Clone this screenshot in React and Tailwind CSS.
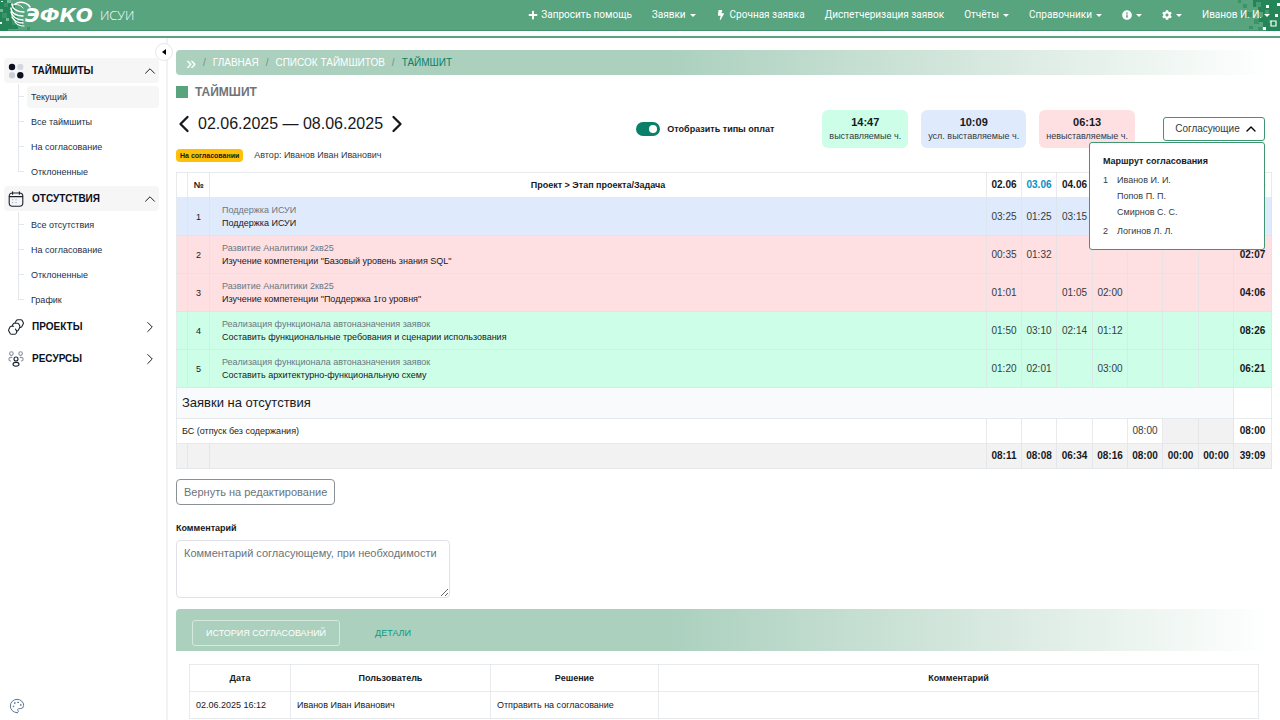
import { ChevronLeft, ChevronRight, ChevronUp, Palette } from "lucide-react";
import { FaBolt, FaCog, FaInfoCircle, FaPlus } from "react-icons/fa";

const NAV_ITEMS = [
  { label: "Запросить помощь", icon: <FaPlus className="size-[10px]" />, gap: "gap-[3px]" },
  { label: "Заявки", caret: true },
  { label: "Срочная заявка", icon: <FaBolt className="size-[10px]" />, gap: "gap-1" },
  { label: "Диспетчеризация заявок" },
  { label: "Отчёты", caret: true },
  { label: "Справочники", caret: true },
  { title: "Информация", icon: <FaInfoCircle className="size-[10px]" />, caret: true },
  { title: "Настройки", icon: <FaCog className="size-[10px]" />, caret: true },
  { label: "Иванов И. И.", caret: true, gap: "gap-[2px]" },
];

const MENU = [
  {
    title: "ТАЙМШИТЫ",
    icon: <DotsIcon />,
    items: ["Текущий", "Все таймшиты", "На согласование", "Отклоненные"],
    active: "Текущий",
  },
  {
    title: "ОТСУТСТВИЯ",
    icon: <CalendarIcon />,
    items: ["Все отсутствия", "На согласование", "Отклоненные", "График"],
  },
  { title: "ПРОЕКТЫ", icon: <ProjectsIcon /> },
  { title: "РЕСУРСЫ", icon: <PeopleIcon /> },
];

const STATS = [
  { value: "14:47", label: "выставляемые ч.", color: "bg-[#ccfee8]" },
  { value: "10:09", label: "усл. выставляемые ч.", color: "bg-[#dfeafd]" },
  { value: "06:13", label: "невыставляемые ч.", color: "bg-[#fedfe2]" },
];

const DAYS = ["02.06", "03.06", "04.06", "05.06", "06.06", "07.06", "08.06"];

const ROWS = [
  {
    project: "Поддержка ИСУИ",
    task: "Поддержка ИСУИ",
    hours: ["03:25", "01:25", "03:15", "", "", "", ""],
    total: "",
    color: "bg-[#dfeafd]",
  },
  {
    project: "Развитие Аналитики 2кв25",
    task: 'Изучение компетенции "Базовый уровень знания SQL"',
    hours: ["00:35", "01:32", "", "", "", "", ""],
    total: "02:07",
    color: "bg-[#fedfe2]",
  },
  {
    project: "Развитие Аналитики 2кв25",
    task: 'Изучение компетенции "Поддержка 1го уровня"',
    hours: ["01:01", "", "01:05", "02:00", "", "", ""],
    total: "04:06",
    color: "bg-[#fedfe2]",
  },
  {
    project: "Реализация функционала автоназначения заявок",
    task: "Составить функциональные требования и сценарии использования",
    hours: ["01:50", "03:10", "02:14", "01:12", "", "", ""],
    total: "08:26",
    color: "bg-[#ccfee8]",
  },
  {
    project: "Реализация функционала автоназначения заявок",
    task: "Составить архитектурно-функциональную схему",
    hours: ["01:20", "02:01", "", "03:00", "", "", ""],
    total: "06:21",
    color: "bg-[#ccfee8]",
  },
];

const ABSENCE = ["", "", "", "", "08:00", "", ""];
const TOTALS = ["08:11", "08:08", "06:34", "08:16", "08:00", "00:00", "00:00"];

const ROUTE = [
  { step: 1, people: ["Иванов И. И.", "Попов П. П.", "Смирнов С. С."] },
  { step: 2, people: ["Логинов Л. Л."] },
];

const cell = "border border-[#dee2e6]/70";

function DotsIcon() {
  return (
    <svg viewBox="0 0 16 16" className="size-4">
      <circle cx="4" cy="4" r="3.2" fill="#0b1020" />
      <rect x="9.3" y="1" width="6" height="6" rx="2.2" fill="#d3d7de" />
      <rect x="1" y="9.3" width="6" height="6" rx="2.2" fill="#c9ced8" />
      <circle cx="12.3" cy="12.3" r="3.2" fill="#0b1020" />
    </svg>
  );
}

function CalendarIcon() {
  return (
    <svg viewBox="0 0 16 16" className="size-4" fill="none" stroke="#1b2230" strokeWidth="1.1" strokeLinecap="round">
      <rect x="1.2" y="2" width="13.6" height="13.2" rx="3.2" />
      <path d="M1.4 5.6h13.2M4.6.7v2.6M11.4.7v2.6" />
      <path d="M4.6 8.8h.1M8 8.8h.1M4.6 11.6h.1M8 11.6h.1" stroke="#98a1b0" />
    </svg>
  );
}

function ProjectsIcon() {
  return (
    <svg viewBox="0 0 16 16" className="size-4" fill="none" stroke="#1b2230" strokeWidth="1.1" strokeLinecap="round" strokeLinejoin="round">
      <path d="M7.2 3.6 8.4 1.5a1.6 1.6 0 0 1 1.4-.8h3a1.6 1.6 0 0 1 1.4.8l1 1.9a1.6 1.6 0 0 1 0 1.5l-1.5 2.8a1.6 1.6 0 0 1-1.4.8h-.6" />
      <path d="M4.2 6.8 5 5.2a1.6 1.6 0 0 1 1.4-.9h3a1.6 1.6 0 0 1 1.4.8l1 1.9a1.6 1.6 0 0 1 0 1.5l-1.4 2.6a1.6 1.6 0 0 1-1.4.9h-.5" />
      <path d="M5.6 7.2H3.4a1.6 1.6 0 0 0-1.4.8L.8 10.4a1.6 1.6 0 0 0 0 1.5l1.4 2.6a1.6 1.6 0 0 0 1.4.8h3a1.6 1.6 0 0 0 1.4-.8l.6-1.1a1.6 1.6 0 0 0 0-1.5L7.4 10" />
    </svg>
  );
}

function PeopleIcon() {
  return (
    <svg viewBox="0 0 16 16" className="size-4" fill="none" strokeWidth="1.1" strokeLinecap="round">
      <g stroke="#8a95a8">
        <circle cx="3.4" cy="2.6" r="1.8" />
        <circle cx="12.6" cy="2.6" r="1.8" />
        <path d="M3.8 6.4H2.6C.3 6.9.3 9.4 2.6 10M12.2 6.4h1.2c2.3.5 2.3 3 0 3.6" />
      </g>
      <g stroke="#1b2230">
        <circle cx="8" cy="8" r="2" />
        <ellipse cx="8" cy="13.3" rx="3" ry="1.9" />
      </g>
    </svg>
  );
}

function Caret() {
  return (
    <svg viewBox="0 0 6 3" className="h-[3px] w-[6px]" fill="currentColor">
      <path d="M0 0h6L3 3z" />
    </svg>
  );
}

function Logo() {
  return (
    <a href="#" className="relative flex h-full items-center pl-[25px] text-white">
      <svg viewBox="0 0 40 31" className="absolute top-0 left-0 h-[31px] w-10">
        <path fill="#238558" d="M0 0h11v5h4v5h-4v6h6v5h5v5h-4v3H8v2H0z" />
        <path fill="#3b9369" d="M4 3h4v4H4zM11 10h4v4h-4zM2 13h5v5H2zM12 20h5v5h-5zM17 23h4v4h-4zM27 27h3v3h-3z" />
        <path fill="#74b896" d="M7 0h4v3H7zM0 9h3v3H0zM6 18h3v3H6z" />
        <path fill="#fff" d="M0 22h2v2H0zM1 1h2v1H1z" />
        <g fill="none" stroke="#fff" strokeWidth="1.5" strokeLinecap="round">
          <path d="M15 4c4-3 12-2 15 3" />
          <path d="M13 5c2-1 7-1 10 3" strokeWidth="1" />
          <path d="M12 4c0 4 4 8 12 8" />
          <path d="M11 8c0 4 4 8 12 8" />
          <path d="M11 12c1 4 5 8 12 8" />
          <path d="M12 17c2 4 5 6 11 6" />
          <path d="M15 22c2 3 5 4 9 4" strokeWidth="1.2" />
        </g>
      </svg>
      <span className="relative font-['DejaVu_Sans',sans-serif] text-[20px] leading-none font-bold italic">ЭФКО</span>
      <span className="ml-[7px] font-['Open_Sans',sans-serif] text-[13px] leading-none font-light">ИСУИ</span>
    </a>
  );
}

function CornerPattern() {
  return (
    <svg viewBox="0 0 48 31" className="absolute top-0 right-0 h-[31px] w-12">
      <path fill="#238558" d="M21 0h27v31H34v-4h-3v-5h-4v-5h4v-5h-5V7h-5z" />
      <path fill="#3b9369" d="M6 0h3v3H6zM11 4h4v4h-4zM14 12h6v5h-6zM8 14h4v4H8zM22 19h5v5h-5zM17 26h4v3h-4zM26 27h4v4h-4z" />
      <path fill="#469b73" d="M24 2h5v5h-5zM33 10h4v4h-4zM37 20h3v3h-3z" />
      <path fill="#fff" d="M34 5h3v3h-3zM43 14h3v3h-3zM31 27h3v3h-3zM45 3h3v3h-3z" />
      <path fill="none" stroke="#fff" strokeWidth="1.2" d="M39 21h5v5h-5z" />
    </svg>
  );
}

function Header() {
  return (
    <header className="border-b-2 border-[#57a47f] pb-[5px]">
      <div className="relative flex h-[31px] items-center justify-between border-b border-[#46946f] bg-[#57a47f] pr-[10px]">
        <CornerPattern />
        <Logo />
        <nav className="relative flex items-center gap-5 font-[Roboto,sans-serif] text-[10px] text-white">
          {NAV_ITEMS.map((item) => (
            <a
              key={item.label || item.title}
              href="#"
              aria-label={item.title}
              className={`flex items-center whitespace-nowrap ${item.gap || "gap-1"}`}
            >
              {item.icon}
              {item.label}
              {item.caret && <Caret />}
            </a>
          ))}
        </nav>
      </div>
    </header>
  );
}

function MenuGroup({ group }) {
  const Arrow = group.items ? ChevronUp : ChevronRight;

  return (
    <li className={group.items ? "" : "mb-[7px]"}>
      <button
        type="button"
        className={`flex h-[25px] w-full items-center rounded pl-1 text-[10px] font-bold text-[#0b1020] ${group.items ? "bg-[#f6f6f6]" : ""}`}
      >
        {group.icon}
        <span className="ml-2">{group.title}</span>
        <Arrow className="ml-auto size-[18px]" strokeWidth={1.25} />
      </button>
      {group.items && (
        <ul className="mt-px mb-[2px] ml-[14px]">
          {group.items.map((item, i) => (
            <li key={item} className="flex h-[25px] items-center gap-[3px]">
              <span className="flex h-full w-[6px] flex-col">
                <span className="flex-1 border-b border-l border-[#e3e6ea]" />
                <span className={`flex-1 border-[#e3e6ea] ${i < group.items.length - 1 ? "border-l" : ""}`} />
              </span>
              <a
                href="#"
                className={`flex h-[22px] flex-1 items-center rounded-sm px-1 text-[#22304a] ${item === group.active ? "bg-[#f6f6f6]" : ""}`}
              >
                {item}
              </a>
            </li>
          ))}
        </ul>
      )}
    </li>
  );
}

function Sidebar() {
  return (
    <aside className="relative flex w-[168px] shrink-0 flex-col border-r-2 border-[#f1f2f4] pt-5 pr-[7px] pb-[6px] pl-1">
      <button
        type="button"
        aria-label="Свернуть меню"
        className="absolute top-[5px] -right-[7px] flex size-[18px] items-center justify-center rounded-full border border-[#e6e8eb] bg-white"
      >
        <svg viewBox="0 0 4 6" className="h-[6px] w-1">
          <path d="M4 0v6L0 3z" />
        </svg>
      </button>
      <ul className="flex flex-col">
        {MENU.map((group) => (
          <MenuGroup key={group.title} group={group} />
        ))}
      </ul>
      <button type="button" aria-label="Тема" className="mt-auto ml-[5px] self-start text-[#5d7896]">
        <Palette className="size-4" strokeWidth={1.5} />
      </button>
    </aside>
  );
}

function Breadcrumbs() {
  return (
    <nav className="flex h-[25px] items-center gap-[7px] rounded-sm bg-linear-to-r from-[#abd0be] from-45% to-white pl-[10px] text-[10px] text-white">
      <span className="text-[18px] leading-none">»</span>
      <span className="text-[#6f9382]">/</span>
      <a href="#">ГЛАВНАЯ</a>
      <span className="text-[#6f9382]">/</span>
      <a href="#">СПИСОК ТАЙМШИТОВ</a>
      <span className="text-[#6f9382]">/</span>
      <span className="text-[#0a8069]">ТАЙМШИТ</span>
    </nav>
  );
}

function Approvers() {
  return (
    <div className="relative">
      <button
        type="button"
        className="flex h-6 w-[102px] items-center justify-center gap-[3px] rounded-[3px] border border-[#3f9670] bg-white pl-[6px] text-[10px] text-[#333b3f]"
      >
        Согласующие
        <ChevronUp className="size-4 text-black" />
      </button>
      <div className="absolute top-[25px] right-0 z-10 w-44 rounded-[3px] border border-[#3f9670] bg-white px-[13px] py-[10px]">
        <h2 className="leading-4 font-bold">Маршрут согласования</h2>
        <ol className="mt-[3px] flex flex-col gap-[3px] leading-4 text-[#333b3f]">
          {ROUTE.map((r) => (
            <li key={r.step} className="flex">
              <span className="w-[14px]">{r.step}</span>
              <div>
                {r.people.map((p) => (
                  <p key={p}>{p}</p>
                ))}
              </div>
            </li>
          ))}
        </ol>
      </div>
    </div>
  );
}

function Summary() {
  return (
    <div className="mt-[10px] flex items-start justify-between pr-[7px]">
      <div className="pt-[2px]">
        <div className="flex h-6 items-center text-[16px]">
          <button type="button" aria-label="Предыдущая неделя" className="-ml-[6px]">
            <ChevronLeft className="size-7" />
          </button>
          02.06.2025 — 08.06.2025
          <button type="button" aria-label="Следующая неделя">
            <ChevronRight className="size-7" />
          </button>
        </div>
        <div className="mt-3 flex h-[14px] items-center gap-[11px]">
          <span className="rounded bg-[#fec107] px-1 py-[2px] text-[7px] leading-[9px] font-bold">
            На согласовании
          </span>
          <span className="text-[#333b3f]">Автор: Иванов Иван Иванович</span>
        </div>
      </div>
      <div className="flex items-center">
        <label className="mr-[48px] flex items-center gap-[7px] font-bold">
          <input
            type="checkbox"
            role="switch"
            defaultChecked
            className="flex h-[14px] w-6 appearance-none items-center rounded-full bg-[#c5cbd1] px-[3px] before:size-2 before:rounded-full before:bg-white checked:justify-end checked:bg-[#0a8069]"
          />
          Отобразить типы оплат
        </label>
        <div className="mr-7 flex gap-[13px]">
          {STATS.map((s) => (
            <div key={s.label} className={`h-[38px] rounded-md px-[7px] pt-[5px] text-center leading-[14px] ${s.color}`}>
              <p className="text-[11px] font-bold">{s.value}</p>
              <p className="text-[#333b3f]">{s.label}</p>
            </div>
          ))}
        </div>
        <Approvers />
      </div>
    </div>
  );
}

function TimesheetTable() {
  return (
    <table className="mt-[10px] w-full table-fixed border-collapse text-center">
      <colgroup>
        <col className="w-[11px]" />
        <col className="w-[22px]" />
        <col />
        {DAYS.map((d, i) => (
          <col key={d} className={i % 3 === 2 ? "w-[36px]" : "w-[35px]"} />
        ))}
        <col className="w-[38px]" />
      </colgroup>
      <thead>
        <tr className="h-[25px]">
          <th className={cell} />
          <th className={cell}>№</th>
          <th className={cell}>Проект &gt; Этап проекта/Задача</th>
          {DAYS.map((d, i) => (
            <th key={d} className={`${cell} text-[10px] ${i === 1 ? "text-[#0a8fc4]" : ""}`}>
              {d}
            </th>
          ))}
          <th className={`${cell} text-[#0a8fc4]`}>Итого</th>
        </tr>
      </thead>
      <tbody>
        {ROWS.map((row, i) => (
          <tr key={row.task} className={`h-[38px] ${row.color}`}>
            <td className={cell} />
            <td className={cell}>{i + 1}</td>
            <td className={`${cell} pl-3 text-left leading-[13px]`}>
              <p className="text-[#6b7780]">{row.project}</p>
              <p>{row.task}</p>
            </td>
            {row.hours.map((h, day) => (
              <td key={DAYS[day]} className={`${cell} text-[10px] text-[#333b3f]`}>
                {h}
              </td>
            ))}
            <td className={`${cell} text-[10px] font-bold`}>{row.total}</td>
          </tr>
        ))}
        <tr className="h-[31px]">
          <td colSpan={10} className={`${cell} bg-[#f9fafb] pl-[5px] text-left text-[13px]`}>
            Заявки на отсутствия
          </td>
          <td className={cell} />
        </tr>
        <tr className="h-[25px]">
          <td colSpan={3} className={`${cell} pl-[5px] text-left`}>
            БС (отпуск без содержания)
          </td>
          {ABSENCE.map((h, day) => (
            <td key={DAYS[day]} className={`${cell} text-[10px] text-[#333b3f] ${day > 4 ? "bg-[#f2f2f2]" : ""}`}>
              {h}
            </td>
          ))}
          <td className={`${cell} text-[10px] font-bold`}>08:00</td>
        </tr>
      </tbody>
      <tfoot>
        <tr className="h-[25px] bg-[#f2f2f2] text-[10px] font-bold">
          <td className={cell} />
          <td className={cell} />
          <td className={cell} />
          {TOTALS.map((t, day) => (
            <td key={DAYS[day]} className={cell}>
              {t}
            </td>
          ))}
          <td className={cell}>39:09</td>
        </tr>
      </tfoot>
    </table>
  );
}

function History() {
  return (
    <section className="mt-[11px]">
      <div className="flex h-[42px] items-center gap-[26px] rounded-t bg-linear-to-r from-[#abd0be] from-45% to-white px-4 pt-[5px]">
        <button type="button" className="h-[26px] rounded-[3px] border border-[#d5e9df] px-[13px] text-white">
          ИСТОРИЯ СОГЛАСОВАНИЙ
        </button>
        <button type="button" className="px-[9px] text-[#0a9a80]">
          ДЕТАЛИ
        </button>
      </div>
      <div className="px-[13px] pt-[13px]">
        <table className="w-full table-fixed border-collapse">
          <colgroup>
            <col className="w-[101px]" />
            <col className="w-[200px]" />
            <col className="w-[168px]" />
            <col />
          </colgroup>
          <thead>
            <tr className="h-[27px]">
              <th className={cell}>Дата</th>
              <th className={cell}>Пользователь</th>
              <th className={cell}>Решение</th>
              <th className={cell}>Комментарий</th>
            </tr>
          </thead>
          <tbody>
            <tr className="h-[27px]">
              <td className={`${cell} px-[6px]`}>02.06.2025 16:12</td>
              <td className={`${cell} px-[6px]`}>Иванов Иван Иванович</td>
              <td className={`${cell} px-[6px]`}>Отправить на согласование</td>
              <td className={cell} />
            </tr>
          </tbody>
        </table>
      </div>
    </section>
  );
}

export default function App() {
  return (
    <div className="flex min-h-screen flex-col bg-white font-['Liberation_Sans',Arial,sans-serif] text-[9px] leading-[14px] text-[#16191d]">
      <Header />
      <div className="flex flex-1">
        <Sidebar />
        <main className="min-w-0 flex-1 pt-3 pr-2 pl-2">
          <Breadcrumbs />
          <h1 className="mt-[9px] flex h-4 items-center gap-[7px] text-[12px] font-bold text-[#6f7478]">
            <span className="size-3 bg-[#57a47f]" />
            ТАЙМШИТ
          </h1>
          <Summary />
          <TimesheetTable />
          <button
            type="button"
            className="mt-[10px] block h-[26px] rounded border border-[#8b9196] px-[7px] text-[11px] text-[#6b7378]"
          >
            Вернуть на редактирование
          </button>
          <label htmlFor="comment" className="mt-4 block font-bold">
            Комментарий
          </label>
          <textarea
            id="comment"
            placeholder="Комментарий согласующему, при необходимости"
            className="mt-[5px] block h-[58px] w-[274px] rounded border border-[#dee2e6] px-[7px] py-[5px] text-[11px] placeholder:text-[#6b7378]"
          />
          <History />
        </main>
      </div>
    </div>
  );
}
